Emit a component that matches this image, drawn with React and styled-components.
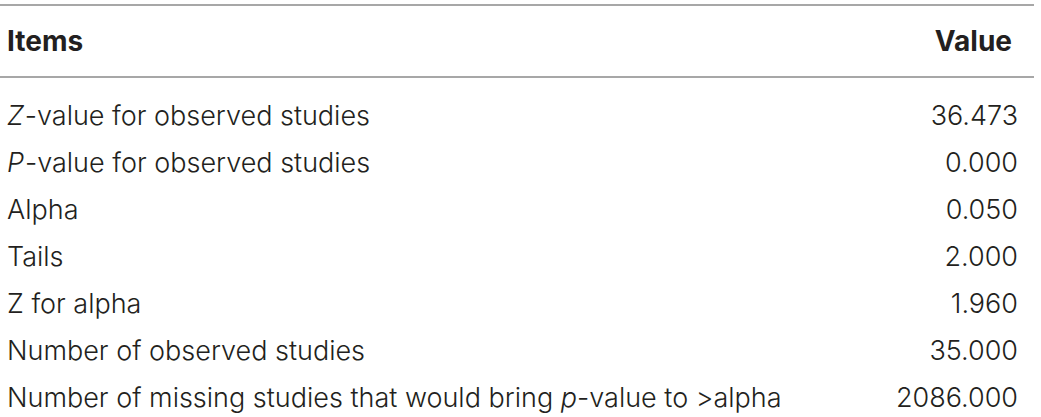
import React from 'react'
import styled, { createGlobalStyle } from 'styled-components'

const GlobalStyle = createGlobalStyle`
  html, body {
    margin: 0;
    padding: 0;
    background: #ffffff;
  }
  body {
    font-family: Inter, "Liberation Sans", Arial, sans-serif;
    color: #231f20;
  }
`

const Page = styled.div`
  width: 1041px;
  height: 417px;
  overflow: hidden;
  padding-top: 4px;
  box-sizing: border-box;
`

const Table = styled.table`
  width: 1034px;
  border-collapse: collapse;
  border-top: 2px solid #a7a7a7;
  font-size: 27px;
  font-weight: 300;
`

const HeadCell = styled.th`
  height: 70px;
  padding: 0 ${p => (p.$right ? '22px' : '0')} 0 ${p => (p.$right ? '0' : '7px')};
  text-align: ${p => (p.$right ? 'right' : 'left')};
  font-size: 28px;
  font-weight: 700;
  border-bottom: 2px solid #a7a7a7;
  vertical-align: middle;
`

const Cell = styled.td`
  height: 47px;
  padding: ${p => (p.$first ? '14px' : '0')} ${p => (p.$right ? '16px' : '0')} 0 ${p => (p.$right ? '0' : '7px')};
  text-align: ${p => (p.$right ? 'right' : 'left')};
  vertical-align: middle;
  white-space: nowrap;
`

const Ital = styled.i`
  font-style: italic;
  margin-right: ${p => (p.$gap ? '1px' : '0')};
`

const rows = [
  [<><Ital $gap>Z</Ital>-value for observed studies</>, '36.473'],
  [<><Ital $gap>P</Ital>-value for observed studies</>, '0.000'],
  ['Alpha', '0.050'],
  ['Tails', '2.000'],
  ['Z for alpha', '1.960'],
  ['Number of observed studies', '35.000'],
  [<>Number of missing studies that would bring <Ital>p</Ital>-value to &gt;alpha</>, '2086.000'],
]

export default function App() {
  return (
    <Page>
      <GlobalStyle />
      <Table>
        <thead>
          <tr>
            <HeadCell>Items</HeadCell>
            <HeadCell $right>Value</HeadCell>
          </tr>
        </thead>
        <tbody>
          {rows.map((r, i) => (
            <tr key={i}>
              <Cell $first={i === 0}>{r[0]}</Cell>
              <Cell $first={i === 0} $right>{r[1]}</Cell>
            </tr>
          ))}
        </tbody>
      </Table>
    </Page>
  )
}
